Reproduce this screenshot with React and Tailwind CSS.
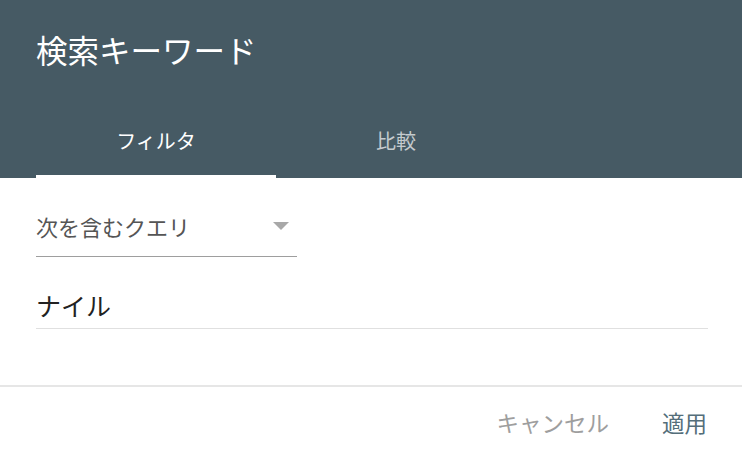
import React from 'react';

const font = { fontFamily: '"Noto Sans CJK JP", "Noto Sans", sans-serif' };

export default function App() {
  return (
    <div className="w-full h-[463px] bg-white overflow-hidden" style={font}>
      <header className="bg-[#465a64] h-[178px] pl-[36px] pt-[34px]">
        <h1 className="text-[31.5px] leading-[31px] text-white font-normal">検索キーワード</h1>
        <div className="mt-[41px] flex">
          <button className="w-[240px] h-[72px] flex items-center justify-center border-b-[3px] border-white text-[20px] text-white">フィルタ</button>
          <button className="w-[240px] h-[72px] flex items-center justify-center border-b-[3px] border-transparent text-[20px] text-white/70">比較</button>
        </div>
      </header>

      <div className="px-[36px]">
        <div className="mt-[37px] w-[261px] flex items-center justify-between pb-[19px] border-b border-[#9e9e9e]">
          <span className="block text-[22px] leading-[22px] text-[#555]">次を含むクエリ</span>
          <svg width="16" height="8" viewBox="0 0 16 8" className="mr-[8px]">
            <path d="M0 0 L16 0 L8 8 Z" fill="#a8a8a8" />
          </svg>
        </div>

        <div className="mt-[36px] mr-[-2px] pb-[10px] border-b border-[#e0e0e0]">
          <span className="block text-[25px] leading-[25px] text-[#222]">ナイル</span>
        </div>
      </div>

      <div className="mt-[56px] border-t-2 border-[#e6e6e6] flex justify-end pr-[35px] gap-[53px] pt-[24px]">
        <button className="block text-[22.5px] leading-[22px] text-[#9e9e9e]">キャンセル</button>
        <button className="block text-[22.5px] leading-[22px] text-[#546e7a]">適用</button>
      </div>
    </div>
  );
}
